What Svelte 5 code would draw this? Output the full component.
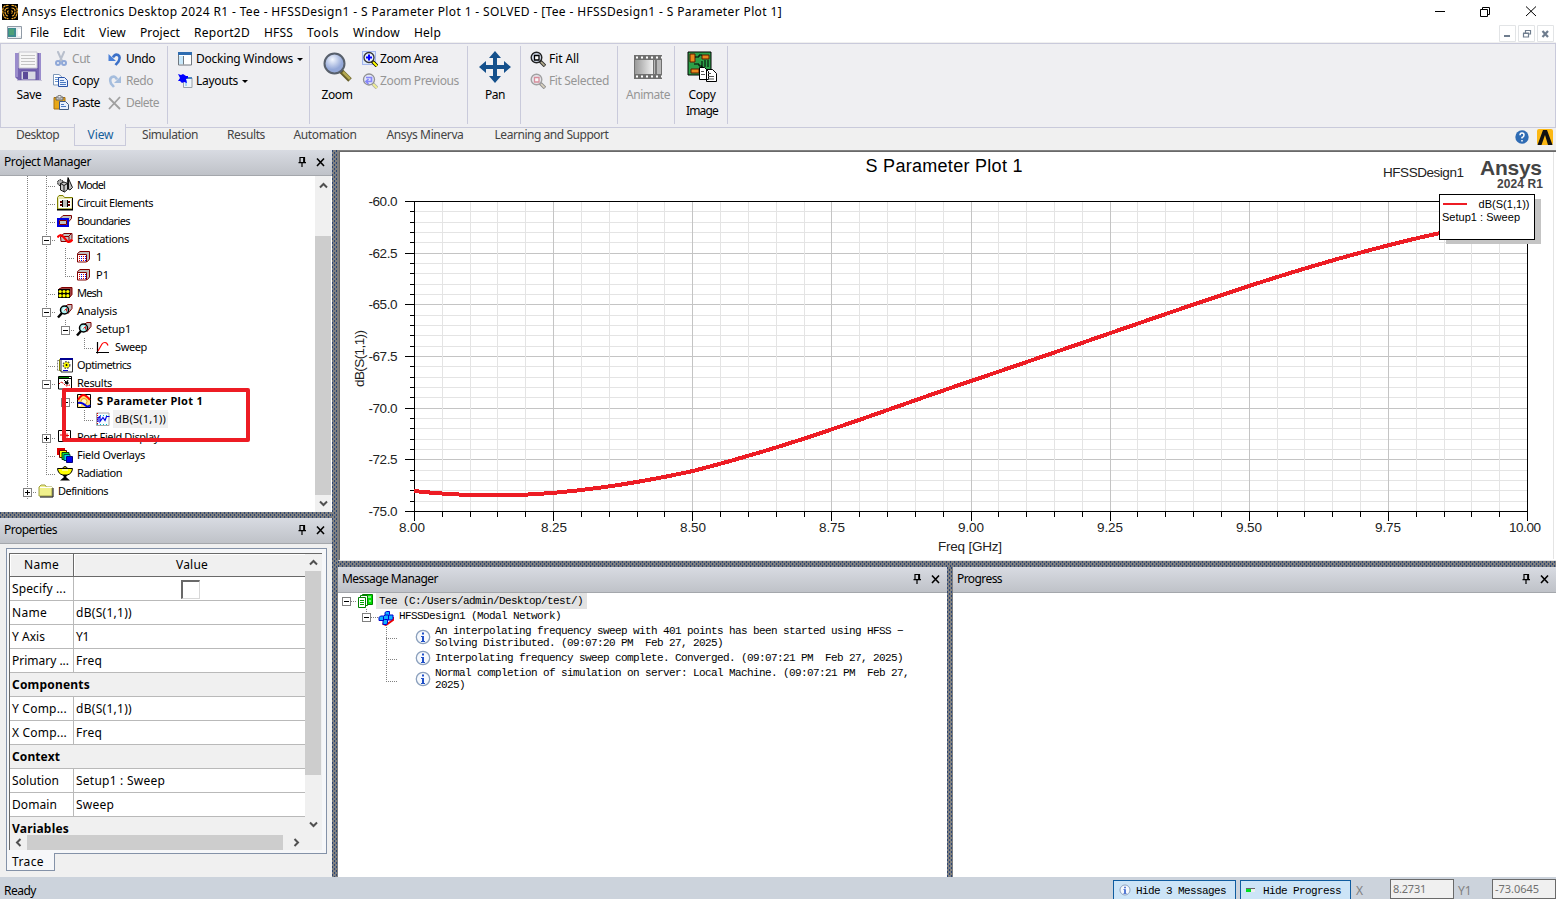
<script>
  // Spreads the letters of a label so that it takes a fixed width.
  function fit(node, width) {
    if (!width) return;
    const natural = node.getBoundingClientRect().width;
    node.style.letterSpacing = (width - natural) / node.textContent.length + 'px';
  }

  const menu = [['File', 19], ['Edit', 22], ['View', 27], ['Project', 40], ['Report2D', 56], ['HFSS', 29], ['Tools', 32], ['Window', 47], ['Help', 27]];
  const tabs = [['Desktop', 74, 43], ['View', 52, 26], ['Simulation', 87, 56], ['Results', 65, 38], ['Automation', 93, 63], ['Ansys Minerva', 107, 77], ['Learning and Support', 146, 114]];

  // guides: "|" line, " " empty, "+" closed, "-" open, "t" branch, "l" last branch, "m" last and open
  const tree = [
    { g: '|t', i: 'model', t: 'Model', w: 28 },
    { g: '|t', i: 'circuit', t: 'Circuit Elements', w: 76 },
    { g: '|t', i: 'bound', t: 'Boundaries', w: 53 },
    { g: '|-', i: 'excite', t: 'Excitations', w: 52 },
    { g: '||t', i: 'port', t: '1', w: 7 },
    { g: '||l', i: 'port', t: 'P1', w: 13 },
    { g: '|t', i: 'mesh', t: 'Mesh', w: 25 },
    { g: '|-', i: 'analysis', t: 'Analysis', w: 40 },
    { g: '||m', i: 'analysis', t: 'Setup1', w: 35 },
    { g: '|| l', i: 'sweep', t: 'Sweep', w: 32 },
    { g: '|t', i: 'opti', t: 'Optimetrics', w: 54 },
    { g: '|-', i: 'results', t: 'Results', w: 35 },
    { g: '||m', i: 'splot', t: 'S Parameter Plot 1', w: 106, bold: true },
    { g: '|| l', i: 'trace', t: 'dB(S(1,1))', w: 51, sel: true },
    { g: '|+', i: 'pfd', t: 'Port Field Display', w: 82 },
    { g: '|t', i: 'overlay', t: 'Field Overlays', w: 68 },
    { g: '|l', i: 'rad', t: 'Radiation', w: 45 },
    { g: '+', i: 'folder', t: 'Definitions', w: 50 }
  ];

  const props = [
    ['Name', 'dB(S(1,1))', 35, 56],
    ['Y Axis', 'Y1', 33, 13],
    ['Primary ...', 'Freq', 57, 26],
    ['Components', null, 78],
    ['Y Comp...', 'dB(S(1,1))', 55, 56],
    ['X Comp...', 'Freq', 55, 26],
    ['Context', null, 48],
    ['Solution', 'Setup1 : Sweep', 47, 89],
    ['Domain', 'Sweep', 45, 38],
    ['Variables', null, 57]
  ];

  const messages = [
    ['An interpolating frequency sweep with 401 points has been started using HFSS −', 'Solving Distributed. (09:07:20 PM  Feb 27, 2025)'],
    ['Interpolating frequency sweep complete. Converged. (09:07:21 PM  Feb 27, 2025)'],
    ['Normal completion of simulation on server: Local Machine. (09:07:21 PM  Feb 27,', '2025)']
  ];

  const lens = '<path d="M8 3.500 11 1.500h4v4l-4 5z" fill="#c0c0c0" stroke="#800000"/><circle cx="7.500" cy="7" r="4" fill="#a8f0f0" stroke="#000" stroke-width="1.500"/><path d="M5.500 8.500 7 5.500 9 6.500" stroke="#fff" fill="none"/><path d="M7.500 7.500l2-2v3" stroke="#e02020" fill="none"/><path d="M5 10 1 14.500" stroke="#000" stroke-width="2.500"/>';
  const icons = {
    model: '<g stroke="#000" stroke-width=".9"><path d="M.5 4.500 3 2.500 6 4v4L3.500 9 1 7.500z" fill="#b4b4b4" stroke-dasharray="2 .7"/><path d="M11 .5 15.500 10.500 13 13 9.500 11z" fill="#bdbdbd"/><path d="M11.500 1v11" fill="none"/><path d="M3.500 6.500 7 5l3.500 1.500v6L7.500 15l-4-2z" fill="#c8c8c8"/><path d="M3.500 6.500 7 8.500l3.500-2M7 8.500V15" fill="none"/></g>',
    circuit: '<path d="M.5 14V2.500L2 .5h4l1.500 2h8V14z" fill="#e8e8b0" stroke="#808000"/><path d="M2 4h12v9H2z" fill="#fff"/><path d="M0 14h16v1.500H0zM15 3h1v12h-1z" fill="#000"/><path d="M6 5h4v7H6z" fill="#c0c0c0"/><path d="M3 6h3v2H3zM3 9h3v2H3zM10 6h3v2h-3zM10 9h3v2h-3z" fill="#600000"/><path d="M5 5h1v7H5zM10 5h1v7h-1z" fill="#000"/>',
    bound: '<path d="M2.500 6 6 2.500h8.500v3L11 9.500" fill="#c0c0c0" stroke="#800000"/><path d="M1 6h10v7H1z" fill="#c0c0c0" stroke="#0000e0" stroke-width="2"/><path d="M2.500 7.500h7v4h-7z" fill="#c0c0c0" stroke="#800000"/>',
    excite: '<path d="M3.500 5.500 7 2.500h8v5l-3 3h-8z" fill="#c0c0c0" stroke="#800000"/><path d="M11.500 5.500l3-3M4 5.500h8v5" stroke="#800000" fill="none"/><path d="M.5 6.500Q3 2.500 6 5.500L10.500 10.500Q13 12 15.500 8.500" stroke="#f00" stroke-width="2.200" fill="none"/>',
    port: '<path d="M1.500 4.500 4 2.500h9.500v7.500l-2 2.500h-10z" fill="#c0c0c0" stroke="#800000"/><path d="M1.500 5.500h9v7.500h-9z" fill="#fff" stroke="#800000"/><path d="M3.500 7v5M7.500 7v5" stroke="#e00000" stroke-dasharray="1 1"/><path d="M5.500 7v5M9.500 7v5" stroke="#0000f0" stroke-dasharray="1 1"/>',
    mesh: '<path d="M2 4 5 2.500h10v7L13 12" fill="#a04040" stroke="#800000"/><path d="M1 4h12v9H1z" fill="#000"/><g fill="#ff0"><circle cx="3.200" cy="6.500" r="1.600"/><circle cx="7" cy="6.500" r="1.600"/><circle cx="10.800" cy="6.500" r="1.600"/><circle cx="3.200" cy="10.700" r="1.600"/><circle cx="7" cy="10.700" r="1.600"/><circle cx="10.800" cy="10.700" r="1.600"/></g>',
    analysis: lens,
    sweep: '<path d="M2.500 3v11.500M1 13.500h13" stroke="#000" stroke-width="1.200"/><path d="M3 12 7 5Q8 3.500 10 3.500Q12 3.500 13 6.500" stroke="#f00" fill="none" stroke-width="1.200"/>',
    opti: '<path d="M.5 3.500h7v10h-7z" fill="#fff" stroke="#808080" stroke-dasharray="2 1"/><path d="M2.500 2.500H10v11H2.500z" fill="#fff" stroke="#808000"/><path d="M4 1.500h11.500V15H4z" fill="#fff" stroke="#333"/><path d="M3 1h13v2H3z" fill="#000090"/><circle cx="9.500" cy="8" r="3" fill="#ff0" stroke="#555" stroke-width="2" stroke-dasharray="1.500 1"/><circle cx="9.500" cy="8" r="2.600" fill="#ff0"/><circle cx="9.500" cy="8" r="1" fill="#000"/><path d="M6 13.500h5" stroke="#00c"/>',
    results: '<path d="M1.500 1.500h13v12.500h-13z" fill="#fff" stroke="#000"/><path d="M2 3.500h12" stroke="#000"/><path d="M2 2h10v1H2z" fill="#008000"/><path d="M2 9l2-2 2 1 3 3 4-1" stroke="#e00000" fill="none" stroke-dasharray="2 1"/><path d="M7 5l2 2M11 5l-1 2M8 7h3v2H9z" stroke="#000" fill="#000"/>',
    splot: '<path d="M1.500 1.500h13v13h-13z" fill="#ffe070" stroke="#000"/><path d="M3 3h3M11 3h3M3 12h2" stroke="#fff" stroke-width="2"/><circle cx="8" cy="8.500" r="3" fill="#fff8c0" stroke="#e0a020"/><path d="M2 7Q5 2 7.500 2T14 7" stroke="#f00" stroke-width="2" fill="none"/><path d="M2 10Q6 9 9 12T14 12" stroke="#0000e0" stroke-width="2" fill="none"/>',
    trace: '<path d="M1.500 2v12.500h12.500V2z" fill="#f4fcff" stroke="#a8a8a8"/><path d="M2 13.500h12M2 4.500h12" stroke="#00b8c8" stroke-dasharray="1 2"/><path d="M2.500 2v12" stroke="#e00000" stroke-dasharray="1 1"/><path d="M3 11V7l2-1.500v5l3-4 2 3 1.500-4h3" stroke="#0000e8" fill="none" stroke-width="1.200"/>',
    pfd: '<path d="M1.500 1.500h12v11h-12z" fill="#fff" stroke="#000"/><path d="M3 6h3M10 4.500v4M8 6.500h4" stroke="#e00000" fill="none"/><path d="M6 3v8" stroke="#000080"/>',
    overlay: '<path d="M0 1h8v7H0z" fill="#e00000"/><path d="M2.500 3.500h7v7h-7z" fill="#ff0" stroke="#600"/><path d="M5 5.500h7v7H5z" fill="#00e040" stroke="#040"/><path d="M7 7.500h6v6H7z" fill="#00d8e8" stroke="#044"/><path d="M9.500 9.500h6v6h-6z" fill="#0000f0" stroke="#000080"/>',
    rad: '<path d="M5 4Q8-1 11 4z" fill="#c0c000" stroke="#000"/><path d="M.5 3.500h15Q15 9 10 10H6Q1 9 .5 3.500z" fill="#ff0" stroke="#000"/><path d="M5.500 10h5l-1.500 2 4 3.500H3L7 12z" fill="#000"/><path d="M5 5h6" stroke="#fff"/>',
    folder: '<path d="M1 4l2-2h4l1.500 2H14v9H1z" fill="#f0f08c" stroke="#a0a040"/><path d="M15 5v9H2" stroke="#000" fill="none"/><path d="M2 4.500h12" stroke="#fff"/>',
    cut: '<g fill="none" stroke-linecap="round"><path d="M5 1 9 10M11 1 7 10" stroke="#b8bfcc" stroke-width="2"/><circle cx="5" cy="12" r="2" stroke="#8fa8d8" stroke-width="2"/><circle cx="11" cy="12" r="2" stroke="#8fa8d8" stroke-width="2"/></g>',
    copy: '<path d="M.5 1.500H6l2.500 2v8.500H.5z" fill="#fff" stroke="#7d97b8"/><path d="M2 4.500h4M2 6.500h3M2 8.500h3" stroke="#6b95cc"/><path d="M5.500 4.500h6l3 3v6H5.500z" fill="#e7f0ff" stroke="#2852a8"/><path d="M7 7.500h4M7 9.500h6M7 11.500h6" stroke="#4a78c0"/>',
    paste: '<path d="M1 2.500h11V14H1z" fill="#e8a818" stroke="#a87010"/><path d="M3 2h7v3H3z" fill="#c8c8c8" stroke="#666"/><path d="M5 .5h3V3H5z" fill="#eee" stroke="#888"/><path d="M6.500 6.500h6l3 3v5h-9z" fill="#e8f0fc" stroke="#405a80"/><path d="M8 9.500h3M8 11.500h5" stroke="#4a78c0"/>',
    undo: '<path d="M6 6.500Q8 2.500 11 4T11.500 10.500L8.500 14" fill="none" stroke="#3b70c8" stroke-width="2.600"/><path d="M1.500 3v7h7.500z" fill="#4a80d8"/>',
    redo: '<path d="M10 6.500Q8 2.500 5 4T4 10.500L7 14" fill="none" stroke="#a5bddd" stroke-width="2.600"/><path d="M14 3v7H7z" fill="#a5bddd"/>',
    del: '<path d="M2 3 13 14M13 2 2 14" stroke="#a0a0a0" stroke-width="1.800"/>',
    dock: '<path d="M1.500 2h13v12h-13z" fill="#fff" stroke="#707880"/><path d="M1 1h14v3H1z" fill="#2e6cb0"/><path d="M2 5h4v8H2z" fill="#c8e8fa"/><path d="M6.500 5v8.500" stroke="#707880"/>',
    layouts: '<path d="M6.500 5h8.500v9.500H6.500z" fill="#eef4fa" stroke="#98a0a8"/><path d="M7 4h8v2H7z" fill="#4f84bc"/><path d="M8 7h2v6H8z" fill="#a8d8f8"/><path d="M1 1l3 1 2-1 3 2h2v2l-2 1 1 4-3-1-2 1-2-2H1l2-3z" fill="#0000ff"/>',
    zarea: '<path d="M.5.5h13v13H.5z" fill="#dce8f8" stroke="#6080e8" stroke-dasharray="1 1"/><path d="M10 10 15 15" stroke="#000" stroke-width="3.500"/><path d="M11 11 15 15" stroke="#ff0" stroke-width="2"/><circle cx="7" cy="6.500" r="5" fill="#e8f0ff" stroke="#333" stroke-width="1.300"/><path d="M7 3.500v6M4 6.500h6" stroke="#00f" stroke-width="2"/>',
    zprev: '<g opacity=".55"><path d="M10 10 15 15" stroke="#777" stroke-width="3.500"/><path d="M11 11 15 15" stroke="#ee4" stroke-width="2"/><circle cx="7" cy="6.500" r="5.500" fill="#d8e0ff" stroke="#444" stroke-width="1.300"/><path d="M4 4.500h5.500v4H4M6.500 6l-2.500 2.500 2.500 2.500" fill="none" stroke="#33f" stroke-width="1.700"/></g>',
    fitall: '<path d="M10 10 15 15" stroke="#333" stroke-width="3.500"/><path d="M11 11 14.500 14.500" stroke="#b8b090" stroke-width="1.700"/><circle cx="6.500" cy="6.500" r="5.300" fill="#ccd4e4" stroke="#222" stroke-width="1.400"/><path d="M4.500 4.500h4.500v4.500H4.500z" fill="#fff" stroke="#000" stroke-width="1.300"/>',
    fitsel: '<g opacity=".5"><path d="M10 10 15 15" stroke="#333" stroke-width="3.500"/><path d="M11 11 14.500 14.500" stroke="#c8b890" stroke-width="1.700"/><circle cx="6.500" cy="6.500" r="5.300" fill="#e0dce4" stroke="#555" stroke-width="1.400"/><path d="M4.500 4.500h4.500v4.500H4.500z" fill="#fff" stroke="#c03048" stroke-width="1.300"/></g>',
    info: '<circle cx="8" cy="8" r="6.700" fill="#f6f9fd" stroke="#8ba0bd" stroke-width="1.300"/><path d="M7 3.500h2v2H7zM6 7h3v5h1v1H6v-1h1V8H6z" fill="#2050c8"/>'
  };

  const X0 = 75, Y0 = 50, W = 1113, H = 310;
  const xs = Array.from({ length: 41 }, (_, i) => ({ p: Math.round(X0 + (i * W) / 40), major: i % 5 === 0 }));
  const ys = Array.from({ length: 31 }, (_, i) => ({ p: Math.round(Y0 + (i * H) / 30), major: i % 5 === 0 }));
  const yLabels = ['-60.0', '-62.5', '-65.0', '-67.5', '-70.0', '-72.5', '-75.0'];
  const xLabels = [['8.00', 73], ['8.25', 215], ['8.50', 354], ['8.75', 493], ['9.00', 632], ['9.25', 771], ['9.50', 910], ['9.75', 1049], ['10.00', 1186]];
</script>

{#snippet T(text, w)}<span class="t" use:fit={w}>{text}</span>{/snippet}
{#snippet icon(name, size = 16)}<svg class="ico" width={size} height={size} viewBox="0 0 16 16">{@html icons[name]}</svg>{/snippet}
{#snippet small(name, text, w, off = false)}<div class="small" class:off>{@render icon(name)}{@render T(text, w)}</div>{/snippet}
{#snippet chev(d)}<svg class="chev" width="9" height="9" viewBox="0 0 9 9"><path d={{ up: 'M1 6.500 4.500 3 8 6.500', down: 'M1 2.500 4.500 6 8 2.500', left: 'M6.500 1 3 4.500 6.500 8', right: 'M2.500 1 6 4.500 2.500 8' }[d]} /></svg>{/snippet}
{#snippet head(title, w)}
  <header class="head">{@render T(title, w)}
    <svg width="28" height="12" viewBox="0 0 28 12"><path d="M3 1.500h4.500v5H3zM1.500 6.700h7.500M5 7v4M6.700 2v5" fill="none" stroke="#000" stroke-width="1.200" /><path d="M20 2.500l7 7.500M27 2.500l-7 7.500" stroke="#000" stroke-width="1.600" /></svg>
  </header>
{/snippet}

<div class="app">
  <div class="title">
    <svg width="16" height="16" viewBox="0 0 16 16"><path d="M0 0h16v16H0z" fill="#000" /><g fill="none" stroke="#f0a828" stroke-width="1.200"><path d="M6.500 1.500Q0 1 .8 8T6.500 14.500M6.500 4Q2.500 4 3 8T6.500 12M6.500 6.500Q4.500 8 6.500 9.500" stroke-dasharray="2.500 .5" /><path d="M9.500 1.500Q16 1 15.200 8T9.500 14.500M9.500 4Q13.500 4 13 8T9.500 12M9.500 6.500Q11.500 8 9.500 9.500" stroke-dasharray="2.500 .5" /></g></svg>
    {@render T('Ansys Electronics Desktop 2024 R1 - Tee - HFSSDesign1 - S Parameter Plot 1 - SOLVED - [Tee - HFSSDesign1 - S Parameter Plot 1]', 760)}
    <svg class="winctl" width="102" height="12" viewBox="0 0 102 12"><path d="M0 6.500h10M45.500 4.500h7v7h-7zM47.500 4V2.500h7v7H53M91 1.500l10 9.500M101 1.500 91 11" fill="none" stroke="#000" /></svg>
  </div>

  <div class="menu">
    <svg width="16" height="13" viewBox="0 0 16 13"><path d="M.5.5h14v12H.5z" fill="#e8ecf0" stroke="#909aa6" /><path d="M1 2h8v9H1z" fill="#3e8a90" /><path d="M2 3h5v6H2z" fill="#4ca078" /><path d="M11 3h3v7h-3z" fill="#fff" /></svg>
    {#each menu as [m, w]}{@render T(m, w)}{/each}
    <svg class="mdi" width="56" height="18" viewBox="0 0 56 18"><g fill="none"><path d="M.5.5h16v16H.5zM19.500.5h16v16h-16zM38.500.5h16v16h-16z" stroke="#e2e4e6" /><path d="M5 11h6" stroke="#6f7d8e" stroke-width="2" /><path d="M24.500 8.500h5v3.500h-5zM26.500 8V5.500h5V9H30M24 8h6M26 5.500h6" stroke="#6f7d8e" stroke-width="1.200" /><path d="M43.500 6l5.500 6M49 6l-5.500 6" stroke="#6f7d8e" stroke-width="2.200" /></g></svg>
  </div>

  <div class="ribbon">
    <div class="group g1">
      <div class="large">
        <svg width="30" height="30" viewBox="0 0 30 30"><path d="M1 1h26v27H4l-3-3z" fill="#7463b0" /><path d="M1 1h3v24H1zM25 1h2v27h-2z" fill="#9a8ccc" /><path d="M5 0h18v16H5z" fill="#f6f6f6" stroke="#c8c8d0" /><path d="M7 3.500h14M7 6.500h14M7 9.500h14M7 12.500h14" stroke="#c4c4c4" /><path d="M7 19h15v9H7z" fill="#d8d8e4" stroke="#6050a0" /><path d="M9 20h5v7H9z" fill="#5b4a98" /><path d="M3 28.500h25" stroke="#c8c4d8" /></svg>
        {@render T('Save', 25)}
      </div>
      <div class="stack s1">{@render small('cut', 'Cut', 18, true)}{@render small('copy', 'Copy', 27)}{@render small('paste', 'Paste', 28)}</div>
      <div class="stack">{@render small('undo', 'Undo', 29)}{@render small('redo', 'Redo', 27, true)}{@render small('del', 'Delete', 33, true)}</div>
    </div>
    <div class="group g2">
      <div class="stack">
        <div class="small">{@render icon('dock')}{@render T('Docking Windows', 97)}<i class="caret"></i></div>
        <div class="small">{@render icon('layouts')}{@render T('Layouts', 42)}<i class="caret"></i></div>
      </div>
    </div>
    <div class="group g3">
      <div class="large">
        <svg width="32" height="32" viewBox="0 0 32 32"><defs><radialGradient id="lens" cx=".4" cy=".3"><stop offset="0" stop-color="#f4f8ff" /><stop offset="1" stop-color="#94a8d8" /></radialGradient></defs><path d="M20 20 29 29" stroke="#665e28" stroke-width="5" /><path d="M22 21 29 28" stroke="#b4a850" stroke-width="2.500" /><circle cx="13.500" cy="12.500" r="10" fill="url(#lens)" stroke="#58606c" stroke-width="2" /></svg>
        {@render T('Zoom', 31)}
      </div>
      <div class="stack">{@render small('zarea', 'Zoom Area', 58)}{@render small('zprev', 'Zoom Previous', 79, true)}</div>
    </div>
    <div class="group g4">
      <div class="large">
        <svg width="32" height="32" viewBox="0 0 32 32"><path d="M16 0l6 7h-4v7h7v-4l7 6-7 6v-4h-7v7h4l-6 7-6-7h4v-7H7v4l-7-6 7-6v4h7V7h-4z" fill="#14508c" /></svg>
        {@render T('Pan', 20)}
      </div>
    </div>
    <div class="group g5">
      <div class="stack">{@render small('fitall', 'Fit All', 30)}{@render small('fitsel', 'Fit Selected', 60, true)}</div>
    </div>
    <div class="group g6">
      <div class="large off">
        <svg width="28" height="28" viewBox="0 0 28 28"><defs><linearGradient id="film"><stop offset="0" stop-color="#9a9a9a" /><stop offset="1" stop-color="#f0f0f0" /></linearGradient></defs><path d="M0 2h28v24H0z" fill="#707070" /><path d="M1 7h18v14H1z" fill="url(#film)" /><path d="M20 7h7v14h-7z" fill="#b8b8b8" /><path d="M21 7h2v14h-2z" fill="#777" /><path d="M2 4.500h26M2 23.500h26" stroke="#fff" stroke-width="2" stroke-dasharray="2 3" /></svg>
        {@render T('Animate', 44)}
      </div>
    </div>
    <div class="group g7">
      <div class="large two">
        <svg width="31" height="32" viewBox="0 0 31 32"><path d="M1 1h23v23H1z" fill="#2ca048" stroke="#000" /><path d="M3 3h5v8H3zM15 4h7v4h-7zM4 18h8v4H4z" fill="#e8881c" stroke="#5a1800" /><path d="M8 6h4V4h3M7 13h5v2h3v3M15 10v8M18 9v7M21 9v7" fill="none" stroke="#000" /><path d="M12.500 16.500h5l4 4v8h-9zM19.500 18.500h6l4 4v8h-10z" fill="#fff" stroke="#000" /><path d="M14 20.500h3M14 23.500h4M21 22.500h3M21 25.500h6M21 28h6" stroke="#555" /></svg>
        {@render T('Copy', 27)}{@render T('Image', 32)}
      </div>
    </div>
  </div>

  <div class="tabs">
    {#each tabs as [t, w, tw], i}<div class="tab" class:on={i === 1} style="width:{w}px">{@render T(t, tw)}</div>{/each}
    <svg class="help" width="38" height="16" viewBox="0 0 38 16"><circle cx="7" cy="8" r="6.700" fill="#2f6cb4" /><path d="M5 6.200Q5 4 7 4T9 6 7 8.500V9.500M7 11v1.500" fill="none" stroke="#fff" stroke-width="1.500" /><path d="M24 0h12q2 0 2 2v12q0 2-2 2H24q-2 0-2-2V2q0-2 2-2z" fill="#fcb813" /><path d="M22.500 16 28 1h4l5.500 15H33L30 6l-3.500 10z" fill="#111" /></svg>
  </div>

  <div class="main">
    <div class="left">
      <section class="pm">
        {@render head('Project Manager', 87)}
        <div class="treewrap">
          <div class="tree">
            {#each tree as r}
              <div class="row">
                {#each r.g.split('') as c}
                  <svg width="19" height="18" viewBox="0 0 19 18" class="guide">
                    {#if c !== ' '}<path d={c === 'l' || c === 'm' ? 'M9.5 0V10' : 'M9.5 0V18'} />{/if}
                    {#if c !== '|' && c !== ' '}<path d="M9 10.500H19" />{/if}
                    {#if '+-m'.includes(c)}<rect x="5.500" y="6.500" width="8" height="8" /><path class="sign" d={c === '+' ? 'M7 10.500h5M9.500 8v5' : 'M7 10.500h5'} />{/if}
                  </svg>
                {/each}
                {@render icon(r.i)}
                <span class="label" class:bold={r.bold} class:sel={r.sel}>{@render T(r.t, r.w)}</span>
              </div>
            {/each}
            <div class="mark"></div>
          </div>
          <div class="vbar pmbar"><span>{@render chev('up')}</span><b></b><span>{@render chev('down')}</span></div>
        </div>
      </section>
      <div class="split h"></div>
      <section class="props">
        {@render head('Properties', 53)}
        <div class="frame">
          <div class="table">
            <div class="rows">
              <div class="prow hd"><div>{@render T('Name', 35)}</div><div>{@render T('Value', 32)}</div></div>
              <div class="prow"><div>{@render T('Specify ...', 54)}</div><div class="mid"><i class="check"></i></div></div>
              {#each props as [n, v, nw, vw]}
                {#if v === null}<div class="prow cat">{@render T(n, nw)}</div>
                {:else}<div class="prow"><div>{@render T(n, nw)}</div><div>{@render T(v, vw)}</div></div>{/if}
              {/each}
            </div>
            <div class="vbar pbar"><span>{@render chev('up')}</span><b></b><span>{@render chev('down')}</span></div>
            <div class="hbar"><span>{@render chev('left')}</span><b></b><span>{@render chev('right')}</span></div>
          </div>
        </div>
        <div class="trace">{@render T('Trace', 32)}</div>
      </section>
    </div>
    <div class="split v"></div>
    <div class="right">
      <div class="plot">
        <svg width="1215" height="408" viewBox="0 0 1215 408">
          <g shape-rendering="crispEdges" fill="none">
            {#each ys as y}<path d="M{X0} {y.p + 0.5}h{W}" stroke={y.major ? '#c4c4c4' : '#e4e4e4'} />{/each}
            {#each xs as x}<path d="M{x.p + 0.5} {Y0}v{H}" stroke={x.major ? '#c4c4c4' : '#e4e4e4'} />{/each}
            {#each ys as y}<path d="M{X0} {y.p + 0.5}h{y.major ? -9 : -4}" stroke="#000" />{/each}
            {#each xs as x}<path d="M{x.p + 0.5} {Y0 + H}v{x.major ? 10 : 6}" stroke="#000" />{/each}
            <rect x={X0 + 0.5} y={Y0 + 0.5} width={W} height={H} stroke="#000" />
            <path d="M75 340C120 345 150 345 180 344C230 342 290 334 354 320C460 293 540 261 632 230C730 197 830 161 910 135C990 109 1060 91 1101 82L1150 72" stroke="#ed1c24" stroke-width="4" />
            <path d="M1214.500 1V408" stroke="#e4e4e4" />
          </g>
          <g class="ax">
            {#each yLabels as l, i}<text x="58.500" y={55 + i * 51.67} text-anchor="end" textLength="29">{l}</text>{/each}
            {#each xLabels as [l, x]}<text {x} y="381" text-anchor="middle" textLength={l.length > 4 ? 32 : 26}>{l}</text>{/each}
            <text x="599" y="400" textLength="64">Freq [GHz]</text>
            <text transform="translate(25 236) rotate(-90)" textLength="57">dB(S(1,1))</text>
            <text x="1044" y="26" textLength="81">HFSSDesign1</text>
          </g>
          <text x="526.500" y="21" class="ptitle" textLength="157">S Parameter Plot 1</text>
          <text x="1141" y="23.500" class="brand" textLength="62">Ansys</text>
          <text x="1158" y="37" class="ver" textLength="46">2024 R1</text>
          <g shape-rendering="crispEdges"><rect x="1107" y="48" width="95" height="45" fill="#c4c4c4" /><rect x="1100.500" y="43.500" width="95" height="45" fill="#fff" stroke="#000" /><path d="M1104 53h24" stroke="#ed1c24" stroke-width="2" /></g>
          <g class="leg"><text x="1139.500" y="57" textLength="51">dB(S(1,1))</text><text x="1103" y="70" textLength="78">Setup1 : Sweep</text></g>
        </svg>
      </div>
      <div class="split h"></div>
      <div class="bottom">
        <section class="mm">
          {@render head('Message Manager', 96)}
          <div class="msgs">
            <div class="mline l1"><svg width="15" height="17" viewBox="0 0 15 17" class="guide"><path d="M9 8.500h6" /><rect x=".5" y="4.500" width="8" height="8" /><path class="sign" d="M2 8.500h5" /></svg>
              <svg width="17" height="16" viewBox="0 0 17 16"><path d="M5.500 1.500h10v10h-10z" fill="#00e000" stroke="#008000" /><path d="M11 3v2M13 3v2M13 7v2" stroke="#fff" /><path d="M3.500 2.500h7v10h-7z" fill="#fff" stroke="#008000" /><path d="M1.500 4.500h7v10h-7z" fill="#fff" stroke="#008000" /><path d="M3 7.500h4M3 9.500h4M3 11.500h4" stroke="#00a000" /></svg>
              <span class="hl">{@render T('Tee (C:/Users/admin/Desktop/test/)', 204)}</span></div>
            <div class="mline l2"><svg width="18" height="16" viewBox="0 0 18 16" class="guide"><path d="M9 8.500h9M4.500 0v4" /><rect x=".5" y="4.500" width="8" height="8" /><path class="sign" d="M2 8.500h5" /></svg>
              <svg width="17" height="16" viewBox="0 0 17 16"><path d="M5 13.500l3.500 1.500L15.500 10V7" fill="none" stroke="#f00000" stroke-width="2" /><g fill="#10b0ff" stroke="#0000d0"><path d="M7.500 2.500 9 1.500h3v3l-1 1H7.500z" /><path d="M1.500 7.500l1.500-1.500h4v3L6 10.500H1.500z" /><path d="M10.500 6.500 12 5h3.500v3.500L14 10h-3.500z" /><path d="M6 6.500l1.500-1.500h3.500v4l-1 1.500H6z" /><path d="M5.500 11 7 9.500h3V13l-1 1.500H5.500z" /></g></svg>
              {@render T('HFSSDesign1 (Modal Network)', 162)}</div>
            <div class="list">
              <svg class="guide rail" width="12" height="58" viewBox="0 0 12 58"><path d="M.5 0v57M0 13.500h11M0 34.500h11M0 56.500h11" /></svg>
              <div class="items">
                {#each messages as m}
                  <div class="msg">{@render icon('info', 16)}<div>{#each m as line}<p>{@render T(line, line.length * 6)}</p>{/each}</div></div>
                {/each}
              </div>
            </div>
          </div>
        </section>
        <div class="split v"></div>
        <section class="prog">{@render head('Progress', 45)}</section>
      </div>
    </div>
  </div>

  <footer class="status">
    <span class="ready">{@render T('Ready', 32)}</span>
    <div class="btn b1">{@render icon('info', 12)}{@render T('Hide 3 Messages', 90)}</div>
    <div class="btn b2"><i class="led"></i>{@render T('Hide Progress', 78)}</div>
    <em class="ex">X</em><div class="field">{@render T('8.2731', 33)}</div>
    <em class="ey">Y1</em><div class="field">{@render T('-73.0645', 44)}</div>
  </footer>
</div>

<style>
  :global(body) { margin: 0; overflow: hidden; }
  .app { width: 1556px; height: 899px; display: flex; flex-direction: column; background: #f0f0f0; font: 12px/16px "Noto Sans", sans-serif; color: #000; overflow: hidden; }
  .t { white-space: pre; display: inline-block; flex: none; }
  svg { flex: none; display: block; }
  .title { height: 23px; background: #fff; display: flex; align-items: center; padding-left: 2px; gap: 4px; flex: none; }
  .winctl { margin-left: auto; margin-right: 19px; margin-bottom: 2px; }
  .menu { height: 19px; background: #fff; display: flex; align-items: center; padding-left: 7px; gap: 14px; flex: none; }
  .menu > svg:first-child { margin-right: -7px; margin-bottom: 1px; }
  .mdi { margin-left: auto; margin-top: 2px; margin-right: 1px; }
  .ribbon { height: 83px; margin-top: 1px; border: 1px solid #c9cadb; background: #efeff2; display: flex; flex: none; box-sizing: content-box; width: 1554px; }
  .group { display: flex; box-sizing: border-box; margin: 2px 0 3px; height: 78px; border-right: 1px solid #c9cadb; padding-top: 1px; }
  .g1 { width: 167px; padding-left: 12px; }
  .g2 { width: 142px; padding-left: 9px; }
  .g3 { width: 158px; padding-left: 11px; }
  .g4 { width: 53px; padding-left: 11px; }
  .g5 { width: 97px; padding-left: 9px; }
  .g6 { width: 57px; padding-left: 8px; }
  .g7 { width: 53px; padding-left: 11px; }
  .large { display: flex; flex-direction: column; align-items: center; width: 32px; }
  .large > svg { height: 34px; margin-top: 3px; margin-bottom: 3px; }
  .large.off { width: 44px; }
  .stack { display: flex; flex-direction: column; margin-top: 1px; }
  .s1 { width: 54px; }
  .g1 .s1 { margin-left: 8px; }
  .g3 .stack { margin-left: 9px; }
  .small { height: 22px; display: flex; align-items: center; gap: 3px; }
  .g3 .small { gap: 2px; }
  .off { color: #969696; }
  .caret { border: 3px solid transparent; border-top-color: #000; border-bottom: 0; margin-left: 1px; }
  .tabs { height: 22px; display: flex; color: #444; flex: none; }
  .tab { display: flex; justify-content: center; height: 19px; box-sizing: border-box; align-items: flex-start; margin-top: -1px; padding-left: 1px; }
  .tab.on { color: #14609c; background: #efeff2; border: 1px solid #c9cadb; border-top: 0; margin-top: -4px; padding-top: 3px; height: 22px; position: relative; }
  .help { margin-left: auto; margin-right: 3px; margin-top: 1px; }
  .main { height: 727px; display: flex; flex: none; }
  .left { width: 332px; flex: none; }
  .split { flex: none; background: #808080 url("data:image/svg+xml,%3Csvg xmlns='http://www.w3.org/2000/svg' width='4' height='4'%3E%3Cpath d='M0 0h1v2H0zM2 2h1v2H2z' fill='%232c4674'/%3E%3C/svg%3E"); }
  .split.h { height: 6px; }
  .split.v { width: 6px; }
  .head { height: 23px; box-sizing: content-box; border-bottom: 1px solid #a4a7ac; background: linear-gradient(#d8dbe2, #bfc2c8); display: flex; align-items: center; justify-content: space-between; padding: 0 7px 2px 4px; }
  .pm { height: 362px; background: #fff; display: flex; flex-direction: column; }
  .treewrap { display: flex; height: 336px; }
  .tree { position: relative; width: 315px; font: 11px/16px "Noto Sans", sans-serif; }
  .row { display: flex; height: 18px; padding-left: 18px; align-items: center; }
  .row .ico { margin: 0 1px; }
  .guide { fill: none; stroke: #808080; }
  .guide path { stroke-dasharray: 1 1; }
  .guide rect { fill: #fff; }
  .guide .sign { stroke: #000; stroke-dasharray: none; }
  .label { padding: 0 2px 0 3px; height: 18px; line-height: 17px; }
  .bold { font-weight: bold; padding-left: 4px; }
  .sel { background: #f0f0f0; margin-left: 1px; padding-left: 2px; }
  .mark { position: absolute; left: 62px; top: 212px; width: 180px; height: 46px; border: 4px solid #ed1c24; border-radius: 2px; }
  .vbar { width: 16px; background: #f0f0f0; display: flex; flex-direction: column; align-items: center; }
  .vbar b { width: 100%; background: #cdcdcd; }
  .vbar span, .hbar span { display: flex; justify-content: center; align-items: center; }
  .chev path { fill: none; stroke: #505050; stroke-width: 2; }
  .pmbar span:first-child { height: 18px; margin-bottom: 42px; }
  .pmbar b { height: 259px; }
  .pmbar span:last-child { height: 17px; }
  .props { height: 359px; background: #f0f0f0; }
  .frame { margin: 4px 0 0 6px; border: 1px solid #8492a8; background: #f6f7f9; padding: 4px 0 0 2px; box-sizing: content-box; display: flex; height: 300px; width: 317px; }
  .table { width: 313px; height: 297px; border: solid #696969; border-width: 1px 0 0 1px; display: grid; grid-template: 280px 16px / 295px 17px; background: #f0f0f0; box-sizing: border-box; }
  .rows { overflow: hidden; background: #fff; }
  .prow { display: grid; grid-template-columns: 64px 1fr; height: 23px; border-bottom: 1px solid #b9b9b9; }
  .prow > div { padding: 4px 0 0 2px; border-right: 1px solid #b9b9b9; overflow: hidden; }
  .prow > div:last-child { border-right: 0; }
  .prow.hd { background: #f0f0f0; height: 22px; border-bottom: 1px solid #696969; }
  .prow.hd > div { text-align: center; border-right-color: #696969; box-shadow: inset 1px 1px #fff; padding: 3px 0 0; }
  .prow.hd > div:last-child { padding-left: 5px; }
  .prow .mid { display: flex; justify-content: center; padding-top: 3px; }
  .check { width: 16px; height: 16px; border: 1px solid #d8d8d8; border-top: 2px solid #696969; border-left: 2px solid #696969; }
  .prow.cat { background: #f0f0f0; font-weight: bold; padding: 4px 0 0 2px; height: 19px; display: block; }
  .prow.cat:last-child { line-height: 11px; padding-top: 6px; height: 11px; border-bottom: 0; }
  .pbar span { height: 17px; }
  .pbar b { height: 204px; margin-bottom: 41px; }
  .hbar { display: flex; align-items: center; }
  .hbar span { width: 17px; }
  .hbar b { width: 256px; height: 15px; background: #cdcdcd; margin-right: 5px; }
  .trace { box-sizing: border-box; width: 49px; height: 18px; border: 1px solid #8492a8; border-top: 0; margin-left: 6px; margin-top: -1px; background: #f6f7f9; position: relative; padding: 1px 0 0 5px; }
  .right { flex: 1; display: flex; flex-direction: column; min-width: 0; }
  .plot { height: 409px; background: #fff; border: 1px solid #808080; border-width: 1px 0 1px 1px; border-bottom-color: #e4e4e4; box-shadow: inset 1px 1px #696969; }
  .ax { font: 13.500px "Liberation Sans", sans-serif; fill: #222; }
  .leg { font: 11px "Liberation Sans", sans-serif; }
  .ptitle { font: 18px "Liberation Sans", sans-serif; }
  .brand { font: bold 21px "Liberation Sans", sans-serif; fill: #444; }
  .ver { font: bold 12px "Liberation Sans", sans-serif; fill: #444; }
  .bottom { display: flex; height: 310px; }
  .mm { width: 609px; background: #fff; }
  .prog { flex: 1; background: #fff; }
  .msgs { font: 11px/12px "Liberation Mono", monospace; padding-left: 4px; }
  .mline { display: flex; align-items: center; }
  .l1, .l2 { height: 16px; }
  .hl { background: #e2e2e2; padding: 2px 4px 2px 3px; margin-left: 2px; }
  .l2 { padding-left: 20px; }
  .l2 .t { margin-left: 4px; position: relative; top: -1px; }
  .l2 > svg:nth-child(2) { margin-left: -3px; margin-top: 1px; width: 18px; }
  .list { display: flex; padding-left: 44px; }
  .items { margin-left: 17px; padding-top: 0; }
  .msg { display: flex; gap: 4px; align-items: center; min-height: 16px; }
  .msg:nth-child(2) { height: 18px; padding-bottom: 0; }
  .msg p { margin: 0; height: 12px; }
  .status { height: 22px; background: #ccd3dc; display: flex; flex: none; align-items: flex-start; }
  .ready { padding: 6px 0 0 4px; width: 1109px; }
  .btn { height: 20px; box-sizing: border-box; margin-top: 3px; border: 1px solid #0f5ca0; background: #cce4f7; font: 11px/20px "Liberation Mono", monospace; display: flex; align-items: center; }
  .btn .t { position: relative; top: 1px; }
  .b1 { width: 123px; padding-left: 5px; gap: 5px; margin-right: 4px; }
  .b2 { width: 111px; padding-left: 5px; gap: 8px; }
  .led { width: 9px; height: 3px; border-top: 1px solid #666; background: linear-gradient(90deg, #00e020 60%, #eee 60%); }
  em { font-style: normal; color: #808080; padding-top: 6px; }
  .ex { width: 34px; padding-left: 5px; }
  .ey { width: 34px; padding-left: 4px; margin-right: 0; }
  .field { width: 64px; height: 20px; margin-top: 2px; box-sizing: border-box; border: 1px solid #6a6a6a; background: #f0f0f0; color: #707070; padding: 1px 2px; font-size: 11px; }
</style>
